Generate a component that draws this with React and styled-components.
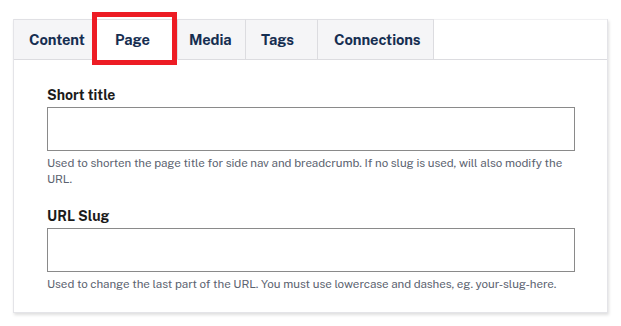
import React from "react";
import styled, { createGlobalStyle } from "styled-components";

const Global = createGlobalStyle`
  html, body { margin: 0; padding: 0; background: #ffffff; }
  body { font-family: "Public Sans", "Roboto", "Liberation Sans", sans-serif; }
`;

const Page = styled.div`
  width: 621px;
  height: 326px;
  padding: 19px 13px 0 13px;
  box-sizing: border-box;
`;

const Panel = styled.div`
  width: 595px;
  height: 294px;
  box-sizing: border-box;
  background: #fff;
  border: 1px solid #e4e4e8;
  border-top: none;
  box-shadow: 1px 2px 3px rgba(0, 0, 0, 0.13);
  display: flex;
  flex-direction: column;
`;

const TabList = styled.div`
  display: flex;
  height: 41px;
`;

const Tab = styled.div`
  position: relative;
  width: ${(p) => p.$w}px;
  padding-left: ${(p) => p.$pad}px;
  box-sizing: border-box;
  display: flex;
  align-items: center;
  font-size: 14.7px;
  font-weight: 700;
  letter-spacing: -0.1px;
  color: #162e51;
  background: ${(p) => (p.$active ? "#ffffff" : "#f5f5f7")};
  border-top: 1px solid #e0e0e4;
  border-right: 1px solid #dcdce0;
  border-bottom: 1px solid ${(p) => (p.$active ? "#ffffff" : "#dcdce0")};
`;

const Filler = styled.div`
  flex: 1;
  border-top: 1px solid #f0f0f2;
  border-bottom: 1px solid #dcdce0;
`;

const Highlight = styled.div`
  position: absolute;
  left: -1px;
  top: -8px;
  width: 85px;
  height: 53px;
  box-sizing: border-box;
  border: 5px solid #ed1c24;
  pointer-events: none;
`;

const Body = styled.div`
  padding: 26px 32px 0 33px;
  display: flex;
  flex-direction: column;
  gap: 20px;
`;

const Field = styled.div`
  display: flex;
  flex-direction: column;
`;

const Label = styled.label`
  font-size: 14px;
  font-weight: 700;
  line-height: 18px;
  color: #1b1b1b;
  margin-bottom: 3px;
`;

const Input = styled.input`
  height: 44px;
  box-sizing: border-box;
  border: 1px solid #8a8a8a;
  border-radius: 0;
  padding: 0 8px;
  font-family: inherit;
  font-size: 14px;
  outline: none;
`;

const Hint = styled.div`
  margin-top: 4px;
  font-size: 11.6px;
  letter-spacing: -0.06px;
  line-height: 16px;
  color: #5c6370;
`;

const tabs = [
  { label: "Content", w: 79, pad: 15 },
  { label: "Page", w: 85, pad: 22 },
  { label: "Media", w: 68, pad: 11 },
  { label: "Tags", w: 72, pad: 15 },
  { label: "Connections", w: 116, pad: 16 },
];

export default function App() {
  return (
    <>
      <Global />
      <Page>
        <Panel>
          <TabList>
            {tabs.map((t) => (
              <Tab key={t.label} $w={t.w} $pad={t.pad} $active={t.label === "Page"}>
                {t.label}
                {t.label === "Page" && <Highlight />}
              </Tab>
            ))}
            <Filler />
          </TabList>
          <Body>
            <Field>
              <Label>Short title</Label>
              <Input type="text" />
              <Hint>
                Used to shorten the page title for side nav and breadcrumb. If no slug is used, will also modify the URL.
              </Hint>
            </Field>
            <Field>
              <Label>URL Slug</Label>
              <Input type="text" />
              <Hint>
                Used to change the last part of the URL. You must use lowercase and dashes, eg. your-slug-here.
              </Hint>
            </Field>
          </Body>
        </Panel>
      </Page>
    </>
  );
}
